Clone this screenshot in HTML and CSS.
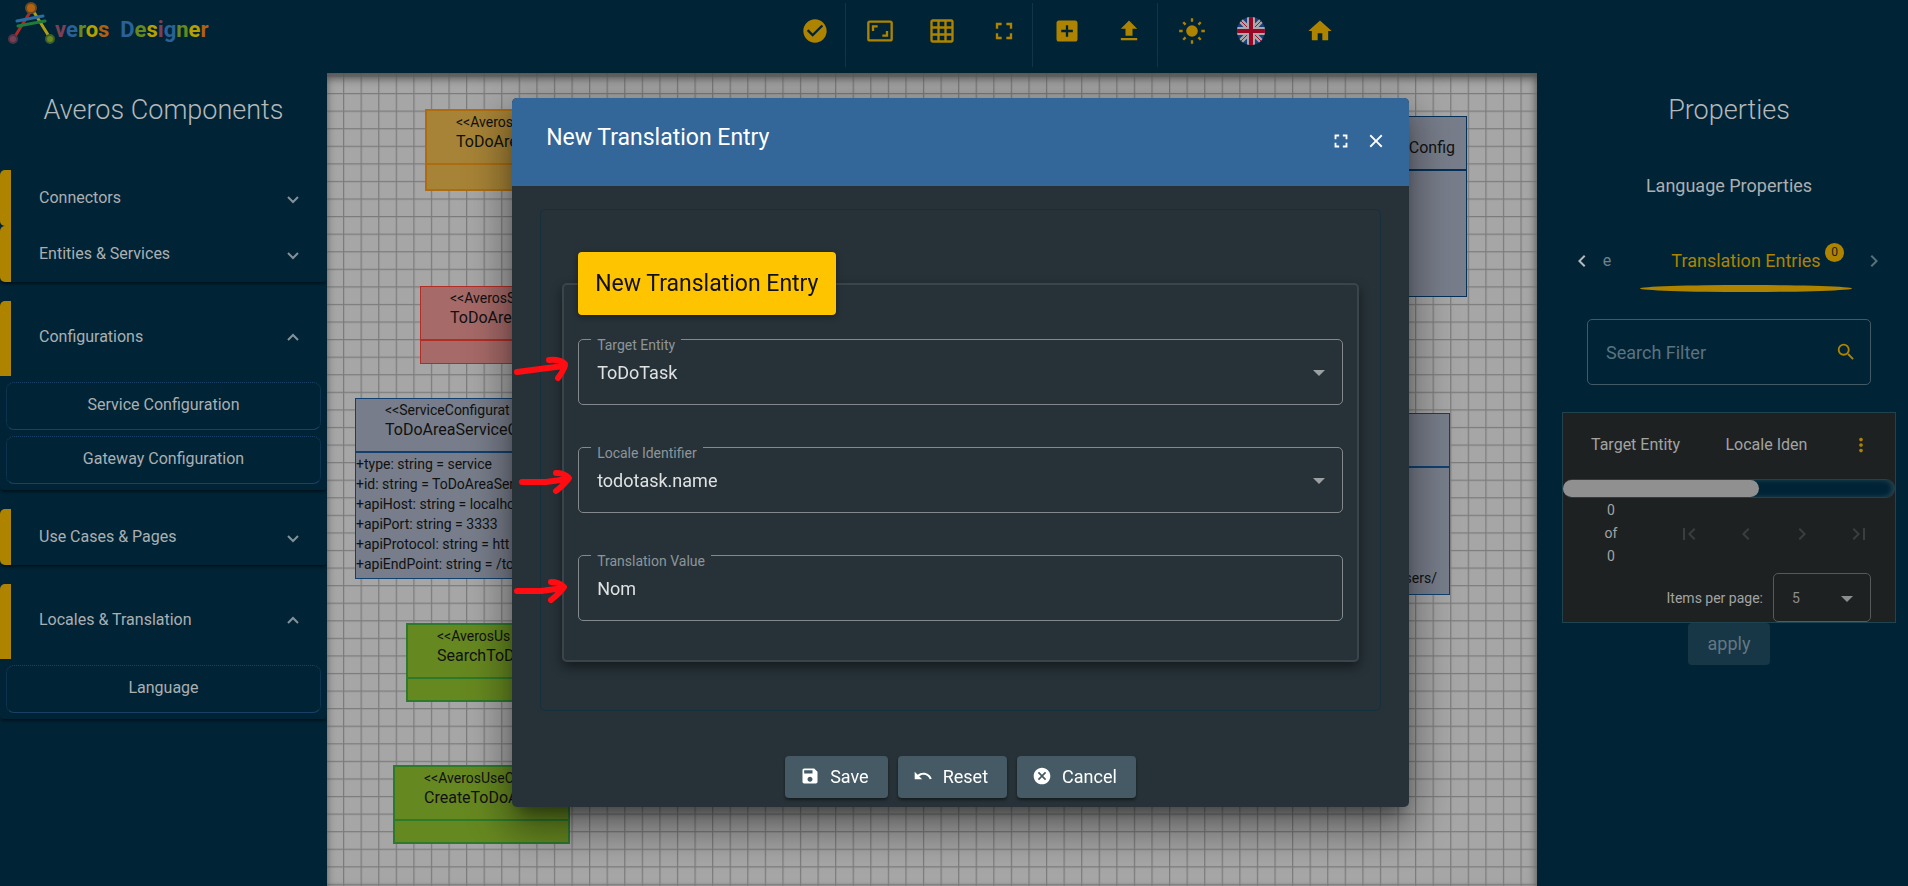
FILE: index.html
```html
<!DOCTYPE html>
<html lang="en">
<head>
<meta charset="utf-8">
<title>Averos Designer</title>
<link rel="stylesheet" href="styles.css">
</head>
<body>
<svg class="defs" aria-hidden="true">
  <symbol id="down" viewBox="0 0 14 14"><path d="M2 4l5 5 5-5" fill="none" stroke="currentColor" stroke-width="2"/></symbol>
  <symbol id="up" viewBox="0 0 14 14"><path d="M2 10l5-5 5 5" fill="none" stroke="currentColor" stroke-width="2"/></symbol>
  <symbol id="left" viewBox="0 0 24 24"><path d="M15.41 7.41L14 6l-6 6 6 6 1.41-1.41L10.83 12z"/></symbol>
  <symbol id="right" viewBox="0 0 24 24"><path d="M10 6L8.59 7.41 13.17 12l-4.58 4.59L10 18l6-6z"/></symbol>
  <symbol id="full" viewBox="0 0 24 24"><path d="M7 14H5v5h5v-2H7v-3zm-2-4h2V7h3V5H5v5zm12 7h-3v2h5v-5h-2v3zM14 5v2h3v3h2V5h-5z"/></symbol>
  <symbol id="arrow" viewBox="0 0 60 40"><path d="M5 23L28 20L52 17M37 11Q48 10 53 15Q54 18 46 29" fill="none" stroke="#ff0d12" stroke-width="6" stroke-linecap="round" stroke-linejoin="round"/></symbol>
  <symbol id="arrow2" viewBox="0 0 60 40"><path d="M8 22L32 22L54 19M42 13Q50 13 55 18Q52 23 42 31" fill="none" stroke="#ff0d12" stroke-width="6" stroke-linecap="round" stroke-linejoin="round"/></symbol>
</svg>

<header class="topbar">
  <a class="brand" href="#" aria-label="Averos Designer">
    <svg class="brand-mark" viewBox="0 0 52 46">
      <g fill="none" stroke-width="3" stroke-linecap="round"><path d="M24 9L6 38" stroke="#a92b24"/><path d="M24 9L42 38" stroke="#aea013"/><path d="M9 21L35 16" stroke="#2c6ba0"/><path d="M10 26L37 21" stroke="#1f7a3b"/></g>
      <g stroke-width="2"><circle cx="23" cy="8" r="5" fill="#b4620f" stroke="#6b4b25"/><circle cx="5" cy="39" r="4" fill="#7a3f55" stroke="#4a3549"/><circle cx="42" cy="39" r="4" fill="#66881f" stroke="#3d5d2c"/></g>
    </svg>
    <span class="brand-text"><span class="c-plum">v</span><span class="c-blue">e</span><span class="c-green">r</span><span class="c-yellow">o</span><span class="c-orange">s</span>&nbsp; <span class="c-blue">D</span><span class="c-green">e</span><span class="c-yellow">s</span><span class="c-plum">i</span><span class="c-blue">g</span><span class="c-green">n</span><span class="c-yellow">e</span><span class="c-orange">r</span></span>
  </a>
  <nav class="tools" aria-label="Designer tools">
    <div class="tool-group">
      <button class="tool" aria-label="Validate"><svg viewBox="0 0 24 24"><path d="M12 2C6.48 2 2 6.48 2 12s4.48 10 10 10 10-4.48 10-10S17.52 2 12 2zm-2 15l-5-5 1.41-1.41L10 14.17l7.59-7.59L19 8l-9 9z"/></svg></button>
    </div>
    <div class="tool-group">
      <button class="tool" aria-label="Fit"><svg viewBox="0 0 24 24"><path d="M19 12h-2v3h-3v2h5v-5zM7 9h3V7H5v5h2V9zm14-6H3c-1.100 0-2 .9-2 2v14c0 1.100.9 2 2 2h18c1.100 0 2-.9 2-2V5c0-1.100-.9-2-2-2zm0 16.010H3V4.990h18v14.020z"/></svg></button>
      <button class="tool" aria-label="Grid"><svg viewBox="0 0 24 24"><path d="M20 2H4c-1.100 0-2 .9-2 2v16c0 1.100.9 2 2 2h16c1.100 0 2-.9 2-2V4c0-1.100-.9-2-2-2zM8 20H4v-4h4v4zm0-6H4v-4h4v4zm0-6H4V4h4v4zm6 12h-4v-4h4v4zm0-6h-4v-4h4v4zm0-6h-4V4h4v4zm6 12h-4v-4h4v4zm0-6h-4v-4h4v4zm0-6h-4V4h4v4z"/></svg></button>
      <button class="tool" aria-label="Full screen"><svg><use href="#full"/></svg></button>
    </div>
    <div class="tool-group">
      <button class="tool" aria-label="Add"><svg viewBox="0 0 24 24"><path d="M19 3H5c-1.110 0-2 .9-2 2v14c0 1.100.89 2 2 2h14c1.100 0 2-.9 2-2V5c0-1.100-.9-2-2-2zm-2 10h-4v4h-2v-4H7v-2h4V7h2v4h4v2z"/></svg></button>
      <button class="tool" aria-label="Upload"><svg viewBox="0 0 24 24"><path d="M5 20h14v-2H5v2zm0-10h4v6h6v-6h4l-7-7-7 7z"/></svg></button>
    </div>
    <div class="tool-group">
      <button class="tool" aria-label="Light theme"><svg viewBox="0 0 24 24"><circle cx="12" cy="12" r="5"/><path d="M12 1v3M12 20v3M1 12h3M20 12h3M4.500 4.500l2 2M17.500 17.500l2 2M4.500 19.500l2-2M17.500 6.500l2-2" stroke="currentColor" stroke-width="2"/></svg></button>
      <button class="tool tool-flag" aria-label="English"><svg viewBox="0 0 28 28"><clipPath id="round"><circle cx="14" cy="14" r="14"/></clipPath><g clip-path="url(#round)"><path fill="#1b3f7c" d="M0 0h28v28H0z"/><path d="M0 0l28 28M28 0L0 28" stroke="#a8a8ac" stroke-width="5"/><path d="M0 0l28 28M28 0L0 28" stroke="#a01030" stroke-width="1"/><path d="M14 0v28M0 14h28" stroke="#a8a8ac" stroke-width="8"/><path d="M14 0v28M0 14h28" stroke="#980824" stroke-width="4"/></g></svg></button>
      <button class="tool tool-home" aria-label="Home"><svg viewBox="0 0 24 24"><path d="M10 20v-6h4v6h5v-8h3L12 3 2 12h3v8z"/></svg></button>
    </div>
  </nav>
</header>

<div class="workspace">
  <aside class="sidebar">
    <h1 class="panel-title">Averos Components</h1>
    <section class="group">
      <button class="row">Connectors<svg><use href="#down"/></svg></button>
      <button class="row">Entities &amp; Services<svg><use href="#down"/></svg></button>
    </section>
    <section class="group">
      <button class="row row-open">Configurations<svg><use href="#up"/></svg></button>
      <div class="items"><button class="item">Service Configuration</button><button class="item">Gateway Configuration</button></div>
    </section>
    <section class="group">
      <button class="row">Use Cases &amp; Pages<svg><use href="#down"/></svg></button>
    </section>
    <section class="group">
      <button class="row row-open">Locales &amp; Translation<svg><use href="#up"/></svg></button>
      <div class="items"><button class="item">Language</button></div>
    </section>
  </aside>

  <main class="canvas">
    <svg class="gridlines" aria-hidden="true">
      <pattern id="grid" width="20" height="20" patternUnits="userSpaceOnUse" patternTransform="translate(16 20) scale(.8787)"><path d="M0 .7H20M.7 0V20" stroke="#7c7c7c" stroke-width="1.400"/></pattern>
      <rect width="100%" height="100%" fill="url(#grid)"/>
    </svg>
    <article class="node n-entity"><header><small>&lt;&lt;Averos</small>ToDoAre</header></article>
    <article class="node n-service"><header><small>&lt;&lt;AverosS</small>ToDoAre</header></article>
    <article class="node n-config"><header><small>&lt;&lt;ServiceConfigurat</small>ToDoAreaServiceC</header>
      <ul><li>+type: string = service</li><li>+id: string = ToDoAreaSer</li><li>+apiHost: string = localho</li><li>+apiPort: string = 3333</li><li>+apiProtocol: string = htt</li><li>+apiEndPoint: string = /to</li></ul></article>
    <article class="node n-search"><header><small>&lt;&lt;AverosUs</small>SearchToD</header></article>
    <article class="node n-create"><header><small>&lt;&lt;AverosUseC</small>CreateToDoA</header></article>
    <article class="node n-gateway"><header><small>&nbsp;</small>Config</header></article>
    <article class="node n-users"><header></header><p>sers/</p></article>
    <div class="canvas-shade"></div>
  </main>

  <aside class="props">
    <h2 class="panel-title">Properties</h2>
    <h3 class="props-sub">Language Properties</h3>
    <div class="tabs">
      <button class="tab-nav on" aria-label="Previous tabs"><svg><use href="#left"/></svg></button>
      <button class="tab tab-cut">e</button>
      <button class="tab tab-active">Translation Entries<span class="badge">0</span></button>
      <button class="tab-nav" aria-label="Next tabs"><svg><use href="#right"/></svg></button>
    </div>
    <div class="search">
      <input type="text" placeholder="Search Filter" aria-label="Search Filter">
      <svg viewBox="0 0 24 24"><path d="M15.500 14h-.79l-.28-.27A6.471 6.471 0 0 0 16 9.500 6.500 6.500 0 1 0 9.500 16c1.610 0 3.090-.59 4.230-1.570l.27.28v.79l5 4.990L20.490 19l-4.990-5zm-6 0C7.010 14 5 11.990 5 9.500S7.010 5 9.500 5 14 7.010 14 9.500 11.990 14 9.500 14z"/></svg>
    </div>
    <div class="grid-box">
      <table class="entries"><thead><tr><th>Target Entity</th><th>Locale Iden</th><th class="more"><button aria-label="More"><svg viewBox="0 0 24 24"><path d="M12 8c1.100 0 2-.9 2-2s-.9-2-2-2-2 .9-2 2 .9 2 2 2zm0 2c-1.100 0-2 .9-2 2s.9 2 2 2 2-.9 2-2-.9-2-2-2zm0 6c-1.100 0-2 .9-2 2s.9 2 2 2 2-.9 2-2-.9-2-2-2z"/></svg></button></th></tr></thead></table>
      <div class="scroll"><div class="thumb"></div></div>
      <div class="pager">
        <div class="range"><span>0</span><span>of</span><span>0</span></div>
        <div class="pages">
          <button aria-label="First page"><svg viewBox="0 0 24 24"><path d="M18.410 16.590L13.820 12l4.590-4.590L17 6l-6 6 6 6zM6 6h2v12H6z"/></svg></button>
          <button aria-label="Previous page"><svg><use href="#left"/></svg></button>
          <button aria-label="Next page"><svg><use href="#right"/></svg></button>
          <button aria-label="Last page"><svg viewBox="0 0 24 24"><path d="M5.590 7.410L10.180 12l-4.590 4.590L7 18l6-6-6-6zM16 6h2v12h-2z"/></svg></button>
        </div>
      </div>
      <div class="size"><label for="size">Items per page:</label><span class="pick"><select id="size"><option>5</option></select></span></div>
    </div>
    <button class="apply" disabled>apply</button>
  </aside>
</div>

<div class="overlay">
  <form class="dialog" role="dialog" aria-labelledby="dlg-title">
    <header class="dlg-head">
      <h2 id="dlg-title">New Translation Entry</h2>
      <button type="button" aria-label="Maximize"><svg><use href="#full"/></svg></button>
      <button type="button" aria-label="Close"><svg viewBox="0 0 24 24"><path d="M19 6.410L17.590 5 12 10.590 6.410 5 5 6.410 10.590 12 5 17.590 6.410 19 12 13.410 17.590 19 19 17.590 13.410 12z"/></svg></button>
    </header>
    <div class="dlg-body">
      <div class="card">
        <h3 class="card-tag">New Translation Entry</h3>
        <div class="field pick"><svg class="pointer p1"><use href="#arrow"/></svg><label for="entity">Target Entity</label><select id="entity"><option>ToDoTask</option></select></div>
        <div class="field pick"><svg class="pointer p2"><use href="#arrow2"/></svg><label for="locale">Locale Identifier</label><select id="locale"><option>todotask.name</option></select></div>
        <div class="field"><svg class="pointer p3"><use href="#arrow2"/></svg><label for="value">Translation Value</label><input id="value" type="text" value="Nom"></div>
      </div>
    </div>
    <footer class="actions">
      <button type="button"><svg viewBox="0 0 24 24"><path d="M17 3H5c-1.110 0-2 .9-2 2v14c0 1.100.89 2 2 2h14c1.100 0 2-.9 2-2V7l-4-4zm-5 16c-1.660 0-3-1.340-3-3s1.340-3 3-3 3 1.340 3 3-1.340 3-3 3zm3-10H5V5h10v4z"/></svg>Save</button>
      <button type="button"><svg viewBox="0 0 24 24"><path d="M12.500 8c-2.650 0-5.050.99-6.900 2.600L2 7v9h9l-3.620-3.620c1.390-1.160 3.160-1.880 5.120-1.880 3.540 0 6.550 2.310 7.600 5.500l2.370-.78C21.080 11.030 17.150 8 12.500 8z"/></svg>Reset</button>
      <button type="button"><svg viewBox="0 0 24 24"><path d="M12 2C6.470 2 2 6.470 2 12s4.470 10 10 10 10-4.470 10-10S17.530 2 12 2zm5 13.590L15.590 17 12 13.410 8.410 17 7 15.590 10.590 12 7 8.410 8.410 7 12 10.590 15.590 7 17 8.410 13.410 12 17 15.590z"/></svg>Cancel</button>
    </footer>
  </form>
</div>
</body>
</html>
```
FILE: styles.css
```css
* { box-sizing: border-box; }
body { margin: 0; min-height: 100vh; display: flex; flex-direction: column; overflow: hidden; background: #002436; color: #abafb2; font: 16px Roboto, "Liberation Sans", sans-serif; }
button, input, select { font: inherit; color: inherit; }
button { border: 0; background: none; padding: 0; }
svg { fill: currentColor; display: block; }
h1, h2, h3, p, ul { margin: 0; padding: 0; font-weight: 400; list-style: none; }
.defs { position: absolute; width: 0; height: 0; }

/* top bar */
.topbar { display: flex; height: 73px; }
.brand { width: 41%; padding-left: 8px; display: flex; align-items: flex-start; text-decoration: none; }
.brand-mark { width: 52px; height: 46px; flex: none; }
.brand-text { font-weight: 700; font-size: 22px; line-height: 60px; margin-left: -5px; }
.c-plum { color: #7c4055; } .c-blue { color: #2a6298; } .c-green { color: #668820; } .c-yellow { color: #b5a000; } .c-orange { color: #b06010; }
.tools { display: flex; height: 67px; padding-top: 3px; color: #ad8300; }
.tool-group { display: flex; }
.tool-group:first-child { padding-left: 3px; }
.tool-group + .tool-group { border-left: 1px solid #123647; padding-left: 3px; margin-right: -3px; }
.tool { width: 62px; height: 56px; display: grid; place-items: center; }
.tool-group:first-child .tool { width: 60px; }
.tool svg { width: 28px; height: 28px; }
.tool.tool-flag { width: 56px; }
.tool.tool-home { width: 82px; }

.workspace { flex: 1; display: grid; grid-template-columns: 327px 1fr 371px; }
.panel-title { font-size: 27px; font-weight: 300; line-height: 36px; text-align: center; color: #b4b8ba; }

/* left panel */
.sidebar { padding-top: 19px; }
.sidebar .panel-title { margin-bottom: 42px; }
.group { margin-bottom: 19px; border-radius: 4px; box-shadow: 0 3px 3px -1px #00121c; }
.row { width: 100%; height: 56px; display: flex; align-items: center; justify-content: space-between; padding: 0 27px 2px 28px; border-left: 11px solid #ad8300; border-radius: 5px 0 0 5px; text-align: left; }
.row svg { width: 14px; height: 14px; margin-top: 6px; color: #84919a; }
.row-open { height: 75px; border-radius: 5px 0 0 0; padding-bottom: 4px; }
.row-open svg { margin-top: 0; }
.items { display: grid; gap: 6px; padding: 6px; }
.item { height: 48px; border: 1px dotted #1b4266; border-bottom-style: solid; border-radius: 8px; padding-bottom: 3px; }

/* diagram */
.canvas { position: relative; overflow: hidden; background: #a6a6a6; color: #111; }
.gridlines { position: absolute; width: 100%; height: 100%; }
.canvas-shade { position: absolute; inset: 0; box-shadow: inset 0 6px 10px -1px #4e4e4e, inset -4px 0 8px -2px #888; }
.node { position: absolute; border: 1px solid; overflow: hidden; white-space: nowrap; }
.node header { height: 54px; padding: 2px 29px; border: 0 solid; border-color: inherit; border-bottom-width: 2px; line-height: 21px; }
.node small { display: block; font-size: 14px; line-height: 18px; }
.node ul { font-size: 14px; line-height: 20px; padding: 1px 0 4px; }
.n-entity { left: 98px; top: 36px; width: 190px; height: 82px; background: #a68336; border: 2px solid #ae6c10; }
.n-service { left: 93px; top: 213px; width: 190px; height: 78px; background: #a66a68; border-color: #b02e26; }
.n-config { left: 28px; top: 325px; width: 270px; background: #777d8a; border-color: #104070; }
.n-search { left: 79px; top: 550px; width: 190px; height: 79px; background: #668820; border: 2px solid #2d7a2c; }
.n-create { left: 66px; top: 692px; width: 177px; height: 79px; background: #668820; border: 2px solid #2d7a2c; }
.n-gateway { right: 70px; top: 43px; width: 190px; height: 181px; background: #777d8a; border-color: #053158; text-align: right; }
.n-gateway header { padding: 2px 11px; }
.n-users { right: 87px; top: 340px; width: 190px; height: 182px; background: #777d8a; border-color: #104070; text-align: right; font-size: 14px; }
.n-users p { margin-top: 102px; padding-right: 12px; }

/* properties */
.props { padding: 19px 12px 0 25px; display: flex; flex-direction: column; align-items: stretch; }
.props-sub { font-size: 18px; line-height: 24px; text-align: center; margin-top: 46px; }
.tabs { display: flex; align-items: center; height: 48px; margin: 39px 8px 0; }
.tab-nav { width: 26px; color: #56707c; }
.tab-nav svg { width: 24px; height: 24px; }
.tab-nav.on { color: #b4babd; }
.tab { height: 48px; padding-bottom: 2px; }
.tab-cut { width: 22px; color: #6d828c; text-align: center; }
.tab-active { position: relative; flex: 1; margin: 0 10px 0 22px; color: #ad8300; font-size: 18px; text-align: center; }
.tab-active::after { content: ""; position: absolute; left: 0; right: 0; bottom: -7px; height: 7px; border-radius: 50%; background: #ad8300; }
.badge { position: absolute; right: 8px; top: 6px; width: 19px; height: 19px; border-radius: 50%; background: #ad8300; color: #14222b; font-size: 12px; line-height: 18px; }
.search { display: flex; align-items: center; height: 66px; margin: 34px 25px 0; border: 1px solid #425a66; border-radius: 5px; padding: 0 13px 0 18px; }
.search input { flex: 1; min-width: 0; border: 0; background: none; font-size: 18px; padding: 0; }
.search input::placeholder { color: #5c727e; opacity: 1; }
.search svg { width: 22px; height: 22px; color: #ad8300; }
.grid-box { margin-top: 27px; border: 1px solid #204350; background: #1e2122; color: #a2a4a4; }
.entries { width: 100%; height: 66px; border-collapse: collapse; }
.entries th { font-weight: 400; text-align: left; padding: 0 0 3px 28px; white-space: nowrap; }
.entries th + th { padding-left: 10px; }
.entries .more { padding: 0 22px 3px 0; width: 60px; }
.more button { color: #ad8300; display: block; margin-left: auto; }
.more svg { width: 24px; height: 22px; }
.scroll { height: 19px; border: 1px solid #363a3c; border-width: 1px 0; background: #002436; }
.scroll { display: flex; border-radius: 9px; box-shadow: inset -3px 0 5px #24434e; }
.thumb { width: 59%; height: 17px; border-radius: 9px; background: #909090; }
.pager { display: flex; align-items: center; height: 71px; padding: 0 10px 0 38px; font-size: 14px; }
.range { width: 20px; display: grid; line-height: 23px; text-align: center; }
.pages { flex: 1; display: flex; justify-content: space-between; padding: 0 14px 0 56px; color: #3a3e40; }
.pages svg { width: 24px; height: 24px; }
.size { display: flex; align-items: center; justify-content: flex-end; gap: 10px; padding: 4px 24px 0 0; font-size: 14px; }
.pick { position: relative; display: block; }
.pick::after { content: ""; position: absolute; right: 18px; top: 50%; border: 6px solid transparent; border-top-color: currentColor; border-bottom: 0; margin-top: -2px; pointer-events: none; }
.pick select { appearance: none; width: 100%; }
.size .pick { width: 98px; height: 49px; color: #8b8e8f; }
.size select { height: 49px; padding: 0 18px; background: none; border: 1px solid #55595a; border-radius: 5px; }
.apply { align-self: center; width: 82px; height: 42px; padding-bottom: 2px; border-radius: 4px; background: #173646; color: #627883; font-size: 18px; }

/* dialog */
.overlay { position: fixed; inset: 0; display: grid; place-items: center; padding: 19px 0 0 13px; }
.dialog { width: 47vw; border-radius: 5px; background: #263238; color: #fff; box-shadow: 0 11px 15px -7px #0006, 0 24px 38px 3px #0004, 0 9px 46px 8px #0003; }
.dlg-head { display: flex; align-items: center; height: 88px; padding: 0 22px 0 34px; background: #336699; border-radius: 5px 5px 0 0; }
.dlg-head h2 { flex: 1; font-size: 23px; line-height: 28px; padding-bottom: 8px; }
.dlg-head button { margin-bottom: 2px; }
.dlg-head svg { width: 22px; height: 22px; }
.dlg-head button + button { margin-left: 13px; }
.dlg-body { margin: 23px 28px 0; padding: 73px 21px 48px; border: 1px solid #162f3d; border-radius: 5px; }
.card { position: relative; display: grid; gap: 42px; padding: 54px 14px 39px; border: 2px solid #3a454b; border-radius: 5px; box-shadow: 0 5px 12px #0007; }
.card-tag { position: absolute; left: 14px; top: -33px; padding: 0 17px; border-radius: 4px; background: #ffc400; color: #111; font-size: 23px; line-height: 63px; box-shadow: 0 2px 6px #0005; }
.field { position: relative; color: #dfe1e2; }
.field select, .field input { display: block; width: 100%; height: 66px; padding: 0 18px; border: 1px solid #83898d; border-radius: 5px; background: none; font-size: 18px; }
.field label { position: absolute; left: 13px; top: -2px; padding: 0 6px; background: #263238; color: #8e9599; font-size: 14px; line-height: 17px; }
.field.pick::after { color: #9ba0a3; right: 18px; }
.pointer { position: absolute; width: 60px; height: 40px; }
.p1 { left: -66px; top: 10px; }
.p2 { left: -64px; top: 13px; }
.p3 { left: -69px; top: 14px; }
.actions { display: flex; justify-content: center; gap: 10px; padding: 45px 0 9px; }
.actions button { display: flex; align-items: center; gap: 10px; height: 42px; padding: 0 19px 2px 15px; border-radius: 4px; background: #455a64; font-size: 18px; box-shadow: 0 2px 3px #0007; }
.actions svg { width: 20px; height: 20px; }
```
